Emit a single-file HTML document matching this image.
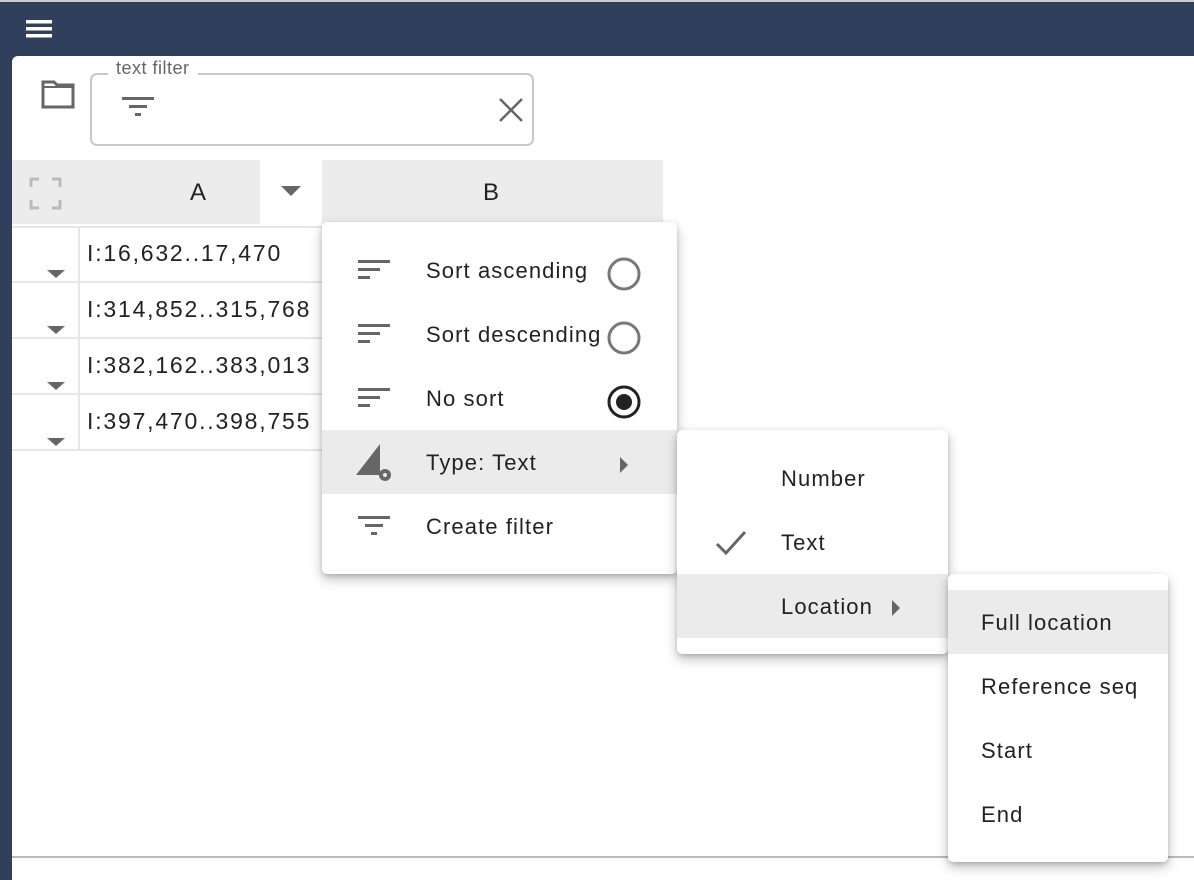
<!DOCTYPE html>
<html><head><style>
*{box-sizing:border-box;margin:0;padding:0}
body{width:1194px;height:880px;overflow:hidden;background:#2f3f5c;font-family:"Liberation Sans",sans-serif;color:#222;position:relative}
.a{position:absolute}
.panel{left:12px;top:56px;width:1182px;height:824px;background:#fff;border-top-left-radius:6px}
.t{font-size:22px;color:#222;white-space:nowrap;line-height:1;letter-spacing:1.1px}
.r{font-size:23px;letter-spacing:1.8px}
.menu{background:#fff;border-radius:5px;box-shadow:0 5px 12px rgba(0,0,0,.25),0 2px 4px rgba(0,0,0,.15)}
.hl{background:#ebebeb}
</style></head><body>
<div class="a" style="left:0;top:0;width:1194px;height:2px;background:#ccc"></div>
<svg class="a" style="left:26px;top:19px" width="27" height="20"><g fill="#fff"><rect y="1" width="26" height="3.5"/><rect y="8" width="26" height="3.5"/><rect y="15" width="26" height="3.5"/></g></svg>
<div class="a panel"></div>
<svg class="a" style="left:41px;top:80px" width="35" height="30"><path d="M2 2h11l3 3h16v22H2z" fill="none" stroke="#666" stroke-width="3"/><path d="M2 7h30" stroke="#666" stroke-width="2"/></svg>
<div class="a" style="left:90px;top:73px;width:444px;height:73px;border:2px solid #c8c8c8;border-radius:7px"></div>
<div class="a" style="left:108px;top:58px;background:#fff;padding:0 8px;font-size:18px;color:#666;letter-spacing:0.5px">text filter</div>
<svg class="a" style="left:122px;top:97px" width="32" height="22"><g fill="#666"><rect width="32" height="3"/><rect x="7" y="8" width="18" height="3"/><rect x="13" y="16" width="6" height="3"/></g></svg>
<svg class="a" style="left:498px;top:97px" width="26" height="26"><path d="M2 2L24 24M24 2L2 24" stroke="#666" stroke-width="2.5"/></svg>
<div class="a" style="left:12px;top:160px;width:248px;height:64px;background:#ececec"></div>
<div class="a" style="left:322px;top:160px;width:341px;height:64px;background:#ececec"></div>
<svg class="a" style="left:29px;top:177px" width="33" height="33"><path d="M2 10V2h8M23 2h8v8M31 23v8h-8M10 31H2v-8" fill="none" stroke="#bbb" stroke-width="3"/></svg>
<div class="a t" style="left:190px;top:181px;font-size:24px">A</div>
<svg class="a" style="left:281px;top:186px" width="20" height="10"><path d="M0 0h20L10 10z" fill="#666"/></svg>
<div class="a t" style="left:483px;top:181px;font-size:24px">B</div>
<div class="a" style="left:12px;top:226px;width:310px;height:225px;border-top:2px solid #e6e6e6"></div>
<div class="a" style="left:78px;top:226px;width:2px;height:224px;background:#e6e6e6"></div>
<div class="a" style="left:12px;top:281px;width:310px;height:2px;background:#e6e6e6"></div>
<div class="a" style="left:12px;top:337px;width:310px;height:2px;background:#e6e6e6"></div>
<div class="a" style="left:12px;top:393px;width:310px;height:2px;background:#e6e6e6"></div>
<div class="a" style="left:12px;top:449px;width:310px;height:2px;background:#e6e6e6"></div>
<svg class="a" style="left:47px;top:270px" width="18" height="180"><g fill="#666"><path d="M0 0h18L9 8z"/><path d="M0 56h18L9 64z"/><path d="M0 112h18L9 120z"/><path d="M0 168h18L9 176z"/></g></svg>
<div class="a t r" style="left:87px;top:242px">I:16,632..17,470</div>
<div class="a t r" style="left:87px;top:298px">I:314,852..315,768</div>
<div class="a t r" style="left:87px;top:354px">I:382,162..383,013</div>
<div class="a t r" style="left:87px;top:410px">I:397,470..398,755</div>
<div class="a" style="left:12px;top:856px;width:1182px;height:2px;background:#bbb"></div>

<div class="a menu" style="left:322px;top:222px;width:355px;height:352px"></div>
<div class="a hl" style="left:322px;top:430px;width:355px;height:64px"></div>
<svg class="a" style="left:358px;top:260px" width="32" height="160"><g fill="#666"><rect width="32" height="3"/><rect y="8" width="22" height="3"/><rect y="16" width="12" height="3"/><rect y="64" width="32" height="3"/><rect y="72" width="22" height="3"/><rect y="80" width="12" height="3"/><rect y="128" width="32" height="3"/><rect y="136" width="22" height="3"/><rect y="144" width="12" height="3"/></g></svg>
<div class="a t" style="left:426px;top:260px">Sort ascending</div>
<div class="a t" style="left:426px;top:324px">Sort descending</div>
<div class="a t" style="left:426px;top:388px">No sort</div>
<div class="a t" style="left:426px;top:452px">Type: Text</div>
<div class="a t" style="left:426px;top:516px">Create filter</div>
<svg class="a" style="left:606px;top:256px" width="36" height="164"><circle cx="18" cy="18" r="15" fill="none" stroke="#777" stroke-width="3"/><circle cx="18" cy="82" r="15" fill="none" stroke="#777" stroke-width="3"/><circle cx="18" cy="146" r="15" fill="none" stroke="#222" stroke-width="3"/><circle cx="18" cy="146" r="8" fill="#222"/></svg>
<svg class="a" style="left:354px;top:442px" width="42" height="42"><path d="M2 33L26 2V33z" fill="#666"/><circle cx="31" cy="33" r="6" fill="#666"/><circle cx="31" cy="33" r="2" fill="#ebebeb"/></svg>
<svg class="a" style="left:620px;top:457px" width="10" height="16"><path d="M0 0L8 8L0 16z" fill="#666"/></svg>
<svg class="a" style="left:358px;top:516px" width="32" height="22"><g fill="#666"><rect width="32" height="3"/><rect x="7" y="8" width="18" height="3"/><rect x="13" y="16" width="6" height="3"/></g></svg>

<div class="a menu" style="left:677px;top:430px;width:271px;height:224px"></div>
<div class="a hl" style="left:677px;top:574px;width:271px;height:64px"></div>
<div class="a t" style="left:781px;top:468px">Number</div>
<div class="a t" style="left:781px;top:532px">Text</div>
<div class="a t" style="left:781px;top:596px">Location</div>
<svg class="a" style="left:715px;top:530px" width="32" height="26"><path d="M2 14L11 23L30 2" fill="none" stroke="#666" stroke-width="3"/></svg>
<svg class="a" style="left:892px;top:600px" width="10" height="16"><path d="M0 0L8 8L0 16z" fill="#666"/></svg>

<div class="a menu" style="left:948px;top:574px;width:220px;height:288px"></div>
<div class="a hl" style="left:948px;top:590px;width:220px;height:64px"></div>
<div class="a t" style="left:981px;top:612px">Full location</div>
<div class="a t" style="left:981px;top:676px">Reference seq</div>
<div class="a t" style="left:981px;top:740px">Start</div>
<div class="a t" style="left:981px;top:804px">End</div>
</body></html>
